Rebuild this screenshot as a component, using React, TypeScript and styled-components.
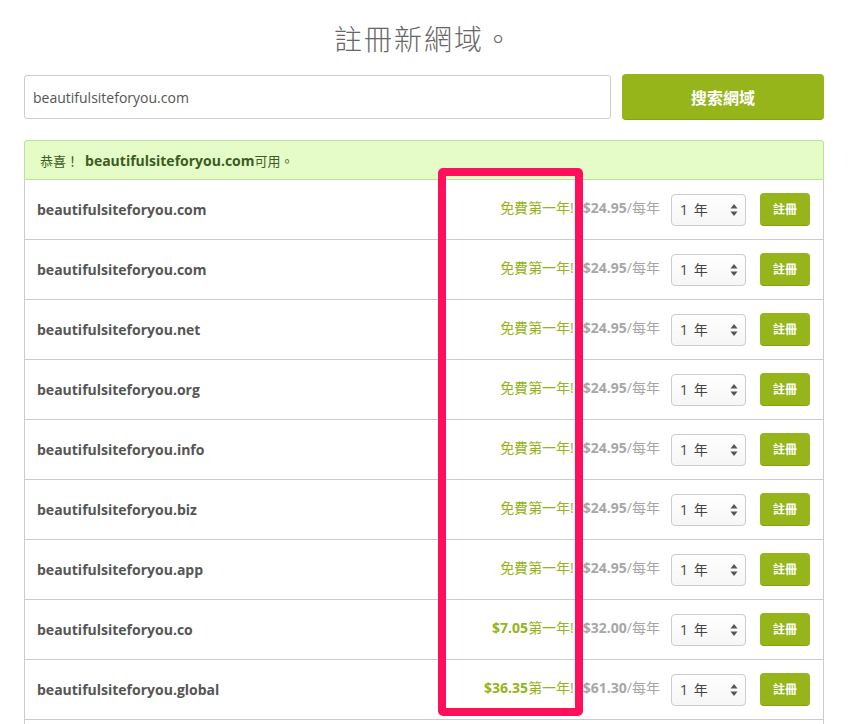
import React from "react";
import styled, { createGlobalStyle } from "styled-components";

const Global = createGlobalStyle`
  html, body { margin: 0; padding: 0; background: #fff; }
  body { font-family: "Open Sans", "Noto Sans CJK TC", sans-serif; }
`;

const Page = styled.div`
  position: relative;
  width: 848px;
  height: 724px;
  overflow: hidden;
`;

const Container = styled.div`
  width: 800px;
  margin: 0 auto;
  padding-top: 20px;
`;

const Title = styled.h1`
  margin: 0;
  text-align: center;
  font-family: "Noto Sans CJK TC", sans-serif;
  font-weight: 300;
  font-size: 28px;
  line-height: 36px;
  color: #666;
  letter-spacing: 2px;
`;

const SearchBar = styled.div`
  display: flex;
  gap: 11px;
  margin-top: 18px;
  align-items: center;
`;

const Input = styled.div`
  flex: 1;
  height: 44px;
  box-sizing: border-box;
  border: 1px solid #ccc;
  border-radius: 3px;
  display: flex;
  align-items: center;
  padding-left: 8px;
  font-size: 14px;
  color: #555;
`;

const SearchButton = styled.button`
  width: 202px;
  height: 46px;
  border: none;
  border-radius: 4px;
  background: #95b51a;
  color: #fff;
  font-family: "Noto Sans CJK TC", sans-serif;
  font-weight: 700;
  font-size: 16px;
  border-bottom: 1px solid #86a315;
`;

const Alert = styled.div`
  margin-top: 20px;
  height: 40px;
  box-sizing: border-box;
  background: #e5fcc9;
  border: 1px solid #b8e297;
  border-radius: 3px 3px 0 0;
  display: flex;
  align-items: center;
  padding-left: 15px;
  font-size: 13px;
  color: #3d5c1f;
`;

const Strong = styled.strong`
  font-weight: 700;
  font-size: 14px;
  margin-left: 6px;
`;

const List = styled.div`
  border-left: 1px solid #ccc;
  border-right: 1px solid #ccc;
`;

const Row = styled.div`
  height: 60px;
  box-sizing: border-box;
  border-bottom: 1px solid #ccc;
  display: flex;
  align-items: center;
  padding: 0 13px 0 12px;
`;

const Domain = styled.div`
  flex: 1;
  font-weight: 700;
  font-size: 14px;
  color: #555;
`;

const Promo = styled.span`
  color: #94b41a;
  font-size: 14px;
  line-height: 20px;
  margin: 0 9px 3px 0;
`;

const PromoPrice = styled.b`
  font-weight: 700;
`;

const Regular = styled.span`
  color: #a7a7a7;
  font-size: 14px;
  line-height: 20px;
  margin-bottom: 3px;
`;

const RegularPrice = styled.b`
  font-weight: 700;
`;

const Select = styled.div`
  margin-left: 11px;
  width: 75px;
  height: 32px;
  box-sizing: border-box;
  border: 1px solid #ccc;
  border-radius: 4px;
  background: linear-gradient(#fff, #f6f6f6);
  display: flex;
  align-items: center;
  justify-content: space-between;
  padding: 0 7px 2px 8px;
  font-size: 14px;
  color: #444;
  word-spacing: 2px;
`;

const Arrows = styled.svg`
  width: 8px;
  height: 14px;
  margin-top: 2px;
`;

const RegButton = styled.button`
  margin-left: 14px;
  width: 50px;
  height: 33px;
  border: none;
  border-radius: 4px;
  background: #95b51a;
  border-bottom: 1px solid #86a315;
  color: #fff;
  font-family: "Noto Sans CJK TC", sans-serif;
  font-weight: 700;
  font-size: 12px;
  padding: 0 0 2px;
`;

const TailRow = styled.div`
  height: 20px;
`;

const Highlight = styled.div`
  position: absolute;
  left: 438px;
  top: 168px;
  width: 145px;
  height: 548px;
  box-sizing: border-box;
  border: 8px solid #ff0f5c;
  border-radius: 5px;
  pointer-events: none;
`;

type Item = { name: string; promo?: string; price: string };

const items: Item[] = [
  { name: "beautifulsiteforyou.com", price: "$24.95" },
  { name: "beautifulsiteforyou.com", price: "$24.95" },
  { name: "beautifulsiteforyou.net", price: "$24.95" },
  { name: "beautifulsiteforyou.org", price: "$24.95" },
  { name: "beautifulsiteforyou.info", price: "$24.95" },
  { name: "beautifulsiteforyou.biz", price: "$24.95" },
  { name: "beautifulsiteforyou.app", price: "$24.95" },
  { name: "beautifulsiteforyou.co", promo: "$7.05", price: "$32.00" },
  { name: "beautifulsiteforyou.global", promo: "$36.35", price: "$61.30" },
];

export default function App() {
  return (
    <Page>
      <Global />
      <Container>
        <Title>註冊新網域。</Title>
        <SearchBar>
          <Input>beautifulsiteforyou.com</Input>
          <SearchButton>搜索網域</SearchButton>
        </SearchBar>
        <Alert>
          恭喜！<Strong>beautifulsiteforyou.com</Strong>可用。
        </Alert>
        <List>
          {items.map((it, i) => (
            <Row key={i}>
              <Domain>{it.name}</Domain>
              <Promo>
                {it.promo ? <PromoPrice>{it.promo}</PromoPrice> : "免費"}第一年!
              </Promo>
              <Regular>
                <RegularPrice>{it.price}</RegularPrice>/每年
              </Regular>
              <Select>
                <span>1 年</span>
                <Arrows viewBox="0 0 8 14">
                  <path d="M4 1 L7.5 5.5 H0.5 Z" fill="#555" />
                  <path d="M4 13 L7.5 8.5 H0.5 Z" fill="#555" />
                </Arrows>
              </Select>
              <RegButton>註冊</RegButton>
            </Row>
          ))}
          <TailRow />
        </List>
      </Container>
      <Highlight />
    </Page>
  );
}
